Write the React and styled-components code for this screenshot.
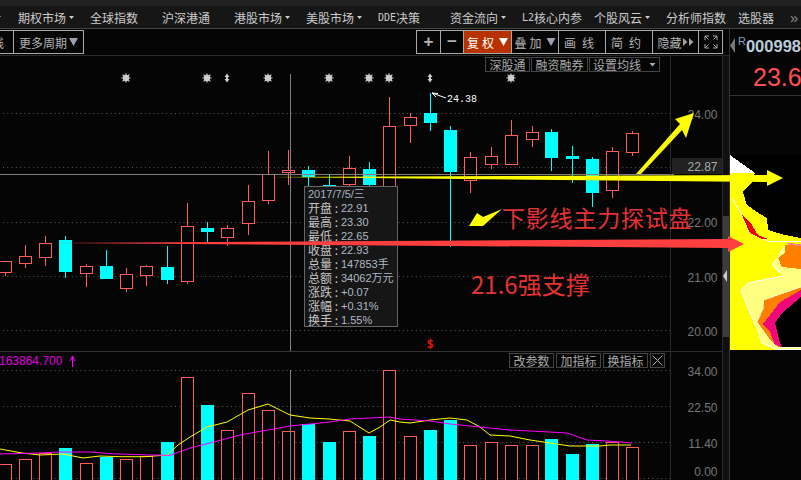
import React from "react";
import styled, { createGlobalStyle } from "styled-components";

const Global = createGlobalStyle`
  html, body {
    margin: 0;
    background: #050505;
    overflow: hidden;
  }
  * {
    box-sizing: border-box;
  }
`;

const CJK = `"Noto Sans CJK SC", "Liberation Sans", sans-serif`;
const NUM = `"Liberation Sans", "Noto Sans CJK SC", sans-serif`;
const RED = "#ff5c5c";
const CYAN = "#00ffff";

const Page = styled.div`
  position: relative;
  width: 801px;
  height: 480px;
  overflow: hidden;
  display: flex;
  flex-direction: column;
  background: #050505;
  font-family: ${CJK};
  font-size: 12px;
`;

const TopStrip = styled.div`
  height: 6px;
  background: #222;
`;

const Nav = styled.nav`
  height: 23px;
  display: grid;
  grid-template-columns: 18px repeat(10, 72px) 52px 1fr;
  align-items: center;
  background: #161616;
  border-bottom: 1px solid #444;
  color: #ccc;
  line-height: 22px;
  white-space: nowrap;
`;

const NavItem = styled.div`
  display: flex;
  align-items: center;
`;

const NavMore = styled.div`
  font-family: ${NUM};
  font-size: 15px;
  color: #8c8c8c;
`;

const Caret = styled.i`
  width: 5px;
  height: 3px;
  margin-left: ${(p) => p.$offset ?? 3}px;
  background: #ccc;
  clip-path: polygon(0 0, 100% 0, 50% 100%);
`;

const Mono = styled.span`
  margin-top: 1px;
  font-family: "DejaVu Sans Mono", monospace;
  font-size: 10px;
`;

const Workspace = styled.div`
  flex: 1;
  display: flex;
  min-height: 0;
`;

const LeftColumn = styled.div`
  width: 730px;
  display: flex;
  flex-direction: column;
  border-right: 1px solid #333;
`;

const Toolbar = styled.div`
  height: 27px;
  flex: none;
  display: flex;
  align-items: flex-start;
  padding: 1px 6px 0 0;
  border-bottom: 1px solid #2a2a2a;
`;

const ToolGroup = styled.div`
  height: 24px;
  display: flex;
  border: 1px solid #a8a8a8;
  margin-left: ${(p) => p.$left || "0"};
`;

const ToolCell = styled.div`
  width: ${(p) => p.$w}px;
  display: flex;
  align-items: center;
  justify-content: center;
  gap: ${(p) => p.$gap ?? 3}px;
  color: ${(p) => (p.$active ? "#fff" : "#b4b4b4")};
  background: ${(p) => (p.$active ? "#b83200" : "transparent")};
  letter-spacing: ${(p) => p.$spread || 0}px;
  white-space: nowrap;
  & + & {
    border-left: 1px solid #a8a8a8;
  }
`;

const Sign = styled.span`
  font-family: ${NUM};
  font-weight: 700;
  font-size: 17px;
  line-height: 22px;
  color: #b4b4b4;
`;

const DropMark = styled.i`
  width: 9px;
  height: 8px;
  margin-left: 1px;
  background: ${(p) => p.$color || "#9aa2b0"};
  clip-path: polygon(0 0, 100% 0, 50% 100%);
`;

const PlayMark = styled.i`
  width: 5px;
  height: 9px;
  background: #a0a0a0;
  clip-path: polygon(0 0, 100% 50%, 0 100%);
`;

const Charts = styled.div`
  flex: 1;
  display: flex;
  min-height: 0;
`;

const PlotColumn = styled.div`
  width: 670px;
  display: flex;
  flex-direction: column;
`;

const PricePane = styled.div`
  position: relative;
  height: 296px;
  border-bottom: 1px solid #333;
`;

const VolumePane = styled.div`
  position: relative;
  flex: 1;
`;

const Plot = styled.svg`
  display: block;
`;

const PaneButtons = styled.div`
  position: absolute;
  top: ${(p) => p.$top}px;
  left: ${(p) => p.$left}px;
  display: flex;
  gap: ${(p) => p.$gap}px;
`;

const PaneButton = styled.div`
  width: ${(p) => p.$w}px;
  height: 15px;
  display: flex;
  align-items: center;
  justify-content: center;
  gap: 8px;
  border: 1px solid #444;
  color: #aaa;
  line-height: 13px;
  white-space: nowrap;
`;

const SmallCaret = styled.i`
  width: 7px;
  height: 4px;
  background: #aaa;
  clip-path: polygon(0 0, 100% 0, 50% 100%);
`;

const Legend = styled.div`
  position: absolute;
  top: 2px;
  left: -1px;
  font-family: ${NUM};
  color: #e000e0;
  line-height: 14px;
`;

const InfoBox = styled.div`
  position: absolute;
  top: 130px;
  left: 304px;
  width: 94px;
  height: 141px;
  padding: 0 3px;
  background: #161616;
  border: 1px solid #666;
  color: #c4c4c4;
`;

const InfoTitle = styled.div`
  height: 14px;
  line-height: 14px;
  font-family: ${NUM};
  font-size: 11px;
  color: #a8b4c4;
  white-space: nowrap;
`;

const InfoRow = styled.div`
  height: 14px;
  display: flex;
  align-items: center;
  white-space: nowrap;
`;

const InfoLabel = styled.span`
  width: 33px;
  line-height: 14px;
`;

const InfoValue = styled.span`
  font-family: ${NUM};
  font-size: 11px;
  line-height: 14px;
  color: #b0b8c4;
`;

const AxisColumn = styled.div`
  width: 53px;
  border-left: 1px solid #2a2a2a;
  border-right: 1px solid #2a2a2a;
`;

const ScrollRail = styled.div`
  position: relative;
  width: 6px;
  background: #101010;
`;

const ScrollThumb = styled.div`
  position: absolute;
  top: 160px;
  left: 0;
  width: 100%;
  height: 121px;
  background: #3c3c3c;
  &::after {
    content: "";
    position: absolute;
    top: 54px;
    left: 0;
    width: 4px;
    height: 12px;
    background: #ccc;
    clip-path: polygon(100% 0, 100% 100%, 0 50%);
  }
`;

const SidePanel = styled.aside`
  width: 71px;
  background: #050505;
`;

const QuoteHead = styled.div`
  height: 67px;
  border-bottom: 1px solid #333;
  overflow: hidden;
`;

const CodeRow = styled.div`
  display: flex;
  align-items: flex-start;
  height: 36px;
  padding-top: 9px;
  white-space: nowrap;
`;

const BackMark = styled.i`
  width: 8px;
  height: 15px;
  background: #777;
  clip-path: polygon(100% 0, 100% 100%, 0 50%);
`;

const MarketTag = styled.span`
  margin: -3px 0 0 3px;
  font-family: ${NUM};
  font-size: 11px;
  line-height: 13px;
  color: #7fa0c0;
`;

const StockCode = styled.span`
  font-family: ${NUM};
  font-size: 16.5px;
  font-weight: 700;
  line-height: 16px;
  color: #b8ccdc;
`;

const LastPrice = styled.div`
  padding-left: 23px;
  font-family: ${NUM};
  font-size: 25px;
  line-height: 24px;
  color: #ff5050;
  white-space: nowrap;
`;

const Profile = styled.svg`
  display: block;
  margin-top: 59px;
  background: #000;
`;

const Overlay = styled.svg`
  position: absolute;
  top: 0;
  left: 0;
  pointer-events: none;
`;

const Callout = styled.div`
  position: absolute;
  top: ${(p) => p.$top}px;
  left: ${(p) => p.$left}px;
  color: #e53232;
  font-size: ${(p) => p.$size}px;
  line-height: 1.2;
  letter-spacing: ${(p) => p.$spread || 0}px;
  white-space: nowrap;
`;

const navItems = [
  { label: "期权市场", caret: true },
  { label: "全球指数" },
  { label: "沪深港通" },
  { label: "港股市场", caret: true },
  { label: "美股市场", caret: true },
  { label: "决策", mono: "DDE" },
  { label: "资金流向", caret: true },
  { label: "核心内参", mono: "L2" },
  { label: "个股风云", caret: true },
  { label: "分析师指数" },
  { label: "选股器" },
];

// left edge, body top, body bottom, wick top, wick bottom, rising
const candles = [
  [-1, 261, 272, 261, 276, 1], [19, 256, 263, 245, 268, 1], [39, 243, 257, 236, 266, 1],
  [59, 240, 272, 236, 278, 0], [80, 266, 273, 264, 287, 1], [100, 266, 279, 250, 279, 0],
  [120, 274, 288, 268, 292, 1], [140, 266, 275, 265, 286, 1], [161, 267, 280, 246, 284, 0],
  [181, 226, 281, 203, 284, 1], [201, 228, 232, 222, 242, 0], [221, 228, 237, 225, 246, 1],
  [242, 201, 223, 185, 235, 1], [262, 174, 200, 151, 204, 1], [282, 170, 172, 150, 185, 1],
  [302, 170, 177, 166, 187, 0], [323, 185, 190, 175, 190, 0], [343, 168, 184, 156, 190, 1],
  [363, 169, 185, 162, 190, 0], [383, 126, 186, 97, 190, 1], [404, 117, 125, 113, 143, 1],
  [424, 113, 123, 93, 131, 0], [444, 130, 172, 126, 247, 0], [464, 157, 180, 152, 193, 1],
  [485, 156, 164, 147, 169, 1], [505, 135, 164, 120, 164, 1], [526, 132, 139, 126, 147, 1],
  [545, 132, 158, 129, 171, 0], [566, 156, 159, 146, 183, 0], [586, 159, 193, 157, 207, 0],
  [606, 151, 190, 147, 198, 1], [626, 133, 152, 131, 156, 1],
];

const volumes = [
  464, 459, 453, 448, 463, 457, 459, 456, 442, 377, 405, 430, 393, 410, 431, 424, 442,
  431, 436, 370, 436, 430, 420, 445, 442, 445, 445, 439, 454, 444, 442, 447,
];

const yellowMa =
  "0,449 22,453 40,455 63,454 83,458 100,456 120,456.7 145,456.7 167,455 178,445 190,437 207,427 227,422 248,410 268,404 290,415 310,418 329,419 350,421 369,433 380,427 390,420 400,422 410,423 430,420 450,418 467,420 480,427 490,435 510,436 530,440 550,443 570,446 600,446 610,445 631,445";
const magentaMa =
  "0,454 40,453 60,452 90,452 110,453.7 150,455 170,455.3 190,448 210,443 240,435 268,430 290,426 310,424 330,422 350,419 370,418 390,417 400,419 430,421 450,424 480,427 510,430 550,432 567,433 587,440 607,441 632,443";

const starsAt = [126, 207, 268, 329, 369, 389, 511];
const splitsAt = [227, 430];
const priceGrid = [113, 167, 222, 276, 330];
const volumeGrid = [370, 406, 442, 478];

const Star = ({ x }) => (
  <g stroke="#ccc" strokeWidth="1.2">
    <circle cx={x} cy={78} r={2.6} fill="#ccc" />
    <path d={`M${x - 4.5} 78H${x + 4.5}M${x} 73.5V82.5M${x - 3.4} 74.6L${x + 3.4} 81.4M${x + 3.4} 74.6L${x - 3.4} 81.4`} />
  </g>
);

const Split = ({ x }) => (
  <g fill="#ccc">
    <polygon points={`${x},73.5 ${x + 2.5},77 ${x - 2.5},77`} />
    <polygon points={`${x},82.5 ${x + 2.5},79 ${x - 2.5},79`} />
    <rect x={x - 1} y={76} width={2} height={4} />
  </g>
);

const GridLine = ({ y }) => (
  <line x1="3" x2="670" y1={y + 0.5} y2={y + 0.5} stroke="#5a5a5a" strokeDasharray="1 3.3" />
);

const Candle = ({ data }) => {
  const [left, top, bottom, wickTop, wickBottom, rising] = data;
  const color = rising ? RED : CYAN;
  const mid = left + 6.5;
  return (
    <g shapeRendering="crispEdges">
      <line x1={mid} x2={mid} y1={wickTop} y2={wickBottom} stroke={color} />
      {rising ? (
        <rect x={left + 0.5} y={top + 0.5} width={12} height={bottom - top} fill="#050505" stroke={color} />
      ) : (
        <rect x={left} y={top} width={13} height={bottom - top} fill={color} />
      )}
    </g>
  );
};

const FullscreenIcon = () => (
  <svg width="14" height="14" viewBox="0 0 14 14" fill="none" stroke="#aaa">
    <path d="M1 5V1H5M1 1L4.5 4.5M9 1H13V5M13 1L9.5 4.5M1 9V13H5M1 13L4.5 9.5M13 9V13H9M13 13L9.5 9.5" />
  </svg>
);

const CloseIcon = () => (
  <svg width="11" height="11" viewBox="0 0 11 11" fill="none" stroke="#aaa">
    <path d="M0.5 0.5L10.5 10.5M10.5 0.5L0.5 10.5" />
  </svg>
);

const PriceChart = () => (
  <Plot width="670" height="295" viewBox="0 56 670 295">
    {priceGrid.map((y) => (
      <GridLine key={y} y={y} />
    ))}
    {starsAt.map((x) => (
      <Star key={x} x={x} />
    ))}
    {splitsAt.map((x) => (
      <Split key={x} x={x} />
    ))}
    {candles.map((c) => (
      <Candle key={c[0]} data={c} />
    ))}
    <line x1="290.5" x2="290.5" y1="74" y2="351" stroke="#808080" />
    <line x1="0" x2="670" y1="174.5" y2="174.5" stroke="#808080" />
    <path d="M432 93L446 98M432 93L438 93.5M432 93L436 97" stroke="#fff" fill="none" />
    <text x="447" y="102" fill="#fff" fontFamily="Liberation Mono, monospace" fontSize="10">
      24.38
    </text>
    <text x="426.5" y="348" fill="#f01010" fontFamily="DejaVu Sans Mono, monospace" fontSize="12" fontWeight="700">
      $
    </text>
  </Plot>
);

const VolumeChart = () => (
  <Plot width="670" height="128" viewBox="0 352 670 128">
    {volumeGrid.map((y) => (
      <GridLine key={y} y={y} />
    ))}
    {volumes.map((top, i) => {
      const c = candles[i];
      return (
        <g key={c[0]} shapeRendering="crispEdges">
          {c[5] ? (
            <rect x={c[0] + 0.5} y={top + 0.5} width={12} height={480 - top} fill="#050505" stroke={RED} />
          ) : (
            <rect x={c[0]} y={top} width={13} height={480 - top} fill={CYAN} />
          )}
        </g>
      );
    })}
    <line x1="290.5" x2="290.5" y1="370" y2="480" stroke="#808080" />
    <polyline points={yellowMa} fill="none" stroke="#ffff00" />
    <polyline points={magentaMa} fill="none" stroke="#ff00ff" />
    <path d="M72.5 356V367M72.5 356L70 361M72.5 356L75 361" fill="none" stroke="#ff00ff" />
  </Plot>
);

const AxisChart = () => (
  <Plot width="51" height="424" viewBox="671 56 51 424" fontFamily="Liberation Sans, sans-serif" fontSize="12">
    <line x1="671" x2="722" y1="351.5" y2="351.5" stroke="#2a2a2a" />
    <line x1="671" x2="674" y1="174.5" y2="174.5" stroke="#808080" />
    <rect x="672" y="158" width="50" height="16" fill="#222" />
    {[
      ["24.00", 119, "#777"],
      ["22.87", 171, "#aaa"],
      ["22.00", 227, "#777"],
      ["21.00", 282, "#777"],
      ["20.00", 336, "#777"],
      ["34.00", 376, "#777"],
      ["22.50", 412, "#777"],
      ["11.40", 448, "#777"],
      ["0.00", 476, "#777"],
    ].map(([label, y, fill]) => (
      <text key={label} x="717.5" y={y} textAnchor="end" fill={fill}>
        {label}
      </text>
    ))}
  </Plot>
);

// chip distribution drawn back to front, coordinates follow the page
const ProfileChart = () => (
  <Profile width="71" height="195" viewBox="730 155 71 195" shapeRendering="crispEdges">
    <polygon points="730,155 755,173 730,173" fill="#fff" />
    <polygon
      points="730,173 755,173 752,182 743,192 745,199 747,205 757,212 767,218 768,230 785,235 801,238 801,350 730,350"
      fill="#ffff00"
    />
    <polyline points="732,198 742,215 750,233 768,241 801,241" fill="none" stroke="#fff" />
    <polygon points="742,215 752,225 758,235 768,239 762,239 750,233 745,222" fill="#f00000" />
    <polygon
      points="784,247 778,258 772,265 784,276 762,280 748,283 741,290 747,305 753,320 758,330 762,343 775,349 801,350 801,244"
      fill="#ffff80"
      stroke="#fff"
    />
    <polygon points="785,245 801,244 801,269 782,267 778,258 785,253" fill="#ff8000" />
    <polygon points="786,243 801,244 801,246 790,245" fill="#ff8080" />
    <polygon
      points="801,287 764,300 763,309 757,322 770,340 778,347 801,347"
      fill="#ff8000"
      stroke="#fff"
      strokeWidth="0.6"
    />
    <polygon points="801,290 780,302 763,324 770,332 775,345 781,347 801,347" fill="#f0087a" />
    <polygon points="801,297 782,313 775,323 780,343 782,347 801,347" fill="#000" />
    <polyline points="801,349 775,349 762,343" fill="none" stroke="#fff" />
  </Profile>
);

export default function App() {
  return (
    <Page>
      <Global />
      <TopStrip />
      <Nav>
        <NavItem>
          <Caret $offset={-4} />
        </NavItem>
        {navItems.map((item) => (
          <NavItem key={item.label}>
            {item.mono && <Mono>{item.mono}</Mono>}
            {item.label}
            {item.caret && <Caret />}
          </NavItem>
        ))}
        <NavMore>»</NavMore>
      </Nav>
      <Workspace>
        <LeftColumn>
          <Toolbar>
            <ToolGroup $left="-30px">
              <ToolCell $w={42}>周线</ToolCell>
              <ToolCell $w={70} $gap={1}>
                更多周期
                <DropMark />
              </ToolCell>
            </ToolGroup>
            <ToolGroup $left="auto">
              <ToolCell $w={23}>
                <Sign>+</Sign>
              </ToolCell>
              <ToolCell $w={23}>
                <Sign>−</Sign>
              </ToolCell>
              <ToolCell $w={48} $active $spread={3} $gap={1}>
                复权
                <DropMark $color="#fff" />
              </ToolCell>
              <ToolCell $w={47} $spread={3} $gap={1}>
                叠加
                <DropMark />
              </ToolCell>
              <ToolCell $w={47} $spread={6}>
                画线
              </ToolCell>
              <ToolCell $w={47} $spread={6}>
                简约
              </ToolCell>
              <ToolCell $w={46} $gap={1}>
                隐藏
                <PlayMark />
                <PlayMark />
              </ToolCell>
              <ToolCell $w={24}>
                <FullscreenIcon />
              </ToolCell>
            </ToolGroup>
          </Toolbar>
          <Charts>
            <PlotColumn>
              <PricePane>
                <PriceChart />
                <PaneButtons $top={1} $left={485} $gap={1}>
                  <PaneButton $w={45}>深股通</PaneButton>
                  <PaneButton $w={57}>融资融券</PaneButton>
                  <PaneButton $w={71}>
                    设置均线
                    <SmallCaret />
                  </PaneButton>
                </PaneButtons>
                <InfoBox>
                  <InfoTitle>2017/7/5/三</InfoTitle>
                  <InfoRow><InfoLabel>开盘 :</InfoLabel><InfoValue>22.91</InfoValue></InfoRow>
                  <InfoRow><InfoLabel>最高 :</InfoLabel><InfoValue>23.30</InfoValue></InfoRow>
                  <InfoRow><InfoLabel>最低 :</InfoLabel><InfoValue>22.65</InfoValue></InfoRow>
                  <InfoRow><InfoLabel>收盘 :</InfoLabel><InfoValue>22.93</InfoValue></InfoRow>
                  <InfoRow><InfoLabel>总量 :</InfoLabel><InfoValue>147853手</InfoValue></InfoRow>
                  <InfoRow><InfoLabel>总额 :</InfoLabel><InfoValue>34062万元</InfoValue></InfoRow>
                  <InfoRow><InfoLabel>涨跌 :</InfoLabel><InfoValue>+0.07</InfoValue></InfoRow>
                  <InfoRow><InfoLabel>涨幅 :</InfoLabel><InfoValue>+0.31%</InfoValue></InfoRow>
                  <InfoRow><InfoLabel>换手 :</InfoLabel><InfoValue>1.55%</InfoValue></InfoRow>
                </InfoBox>
              </PricePane>
              <VolumePane>
                <VolumeChart />
                <Legend>163864.700</Legend>
                <PaneButtons $top={1} $left={509} $gap={2}>
                  <PaneButton $w={45}>改参数</PaneButton>
                  <PaneButton $w={45}>加指标</PaneButton>
                  <PaneButton $w={45}>换指标</PaneButton>
                  <PaneButton $w={15}>
                    <CloseIcon />
                  </PaneButton>
                </PaneButtons>
              </VolumePane>
            </PlotColumn>
            <AxisColumn>
              <AxisChart />
            </AxisColumn>
            <ScrollRail>
              <ScrollThumb />
            </ScrollRail>
          </Charts>
        </LeftColumn>
        <SidePanel>
          <QuoteHead>
            <CodeRow>
              <BackMark />
              <MarketTag>R</MarketTag>
              <StockCode>000998</StockCode>
            </CodeRow>
            <LastPrice>23.6</LastPrice>
          </QuoteHead>
          <ProfileChart />
        </SidePanel>
      </Workspace>

      <Overlay width="801" height="480" viewBox="0 0 801 480">
        <polygon points="269,177 767,175 767,170 783,178 767,186 767,182" fill="#ffff00" />
        <polygon points="52,243 728,239 728,236 744,244 728,252 728,248" fill="#ff3f3f" />
        <polygon points="636,174 680,124 675,119 694,113 686,138 682,130 641,174" fill="#ffff00" />
        <polygon points="502,209 483,226 469,226 477,213 483,217" fill="#ffff00" />
      </Overlay>
      <Callout $top={204} $left={502} $size={23} $spread={0.8}>
        下影线主力探试盘
      </Callout>
      <Callout $top={270} $left={471} $size={24}>
        21.6强支撑
      </Callout>
    </Page>
  );
}
